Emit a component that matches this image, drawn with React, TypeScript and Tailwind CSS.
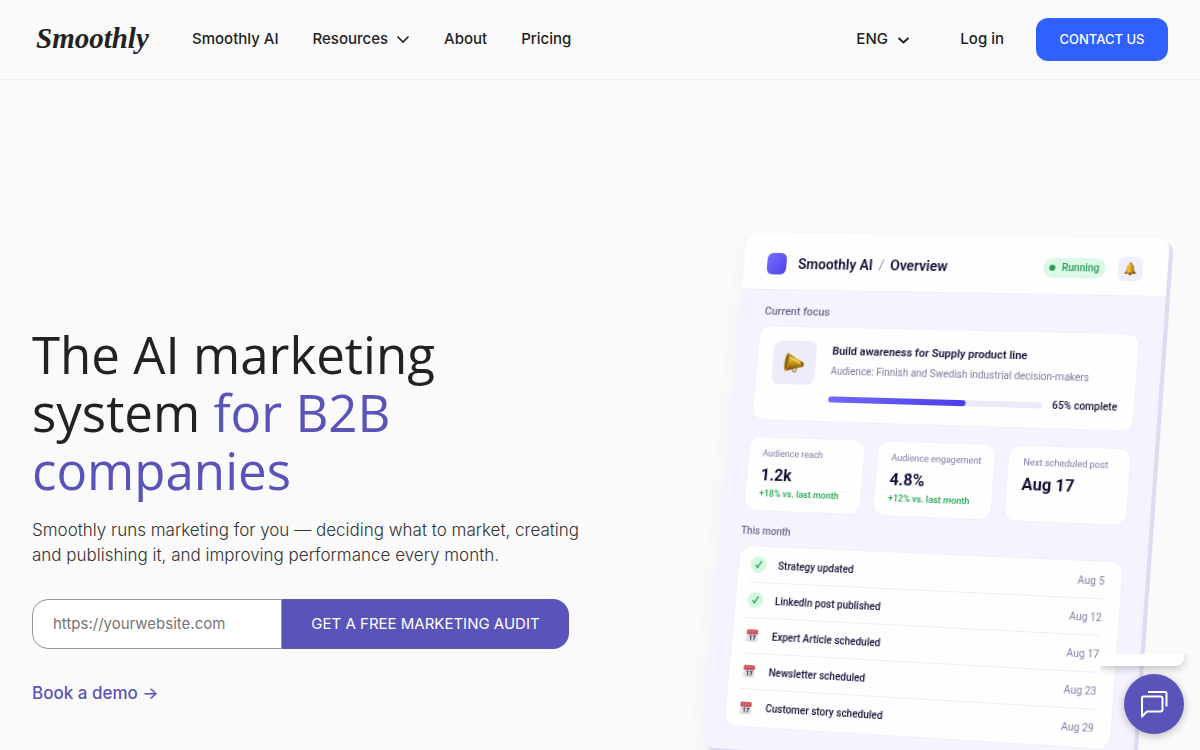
import React, { useState } from "react";

const stats = [
    { label: "Audience reach", value: "1.2k", delta: "+18% vs. last month" },
    { label: "Audience engagement", value: "4.8%", delta: "+12% vs. last month" },
    { label: "Next scheduled post", value: "Aug 17", delta: "" },
];

const posts = [
    { title: "Strategy updated", date: "Aug 5", done: true },
    { title: "LinkedIn post published", date: "Aug 12", done: true },
    { title: "Expert Article scheduled", date: "Aug 17", done: false },
    { title: "Newsletter scheduled", date: "Aug 23", done: false },
    { title: "Customer story scheduled", date: "Aug 29", done: false },
];

const MegaphoneIcon = () => (
    <svg className="w-6 h-6" viewBox="0 0 24 24" aria-hidden="true">
        <defs>
            <linearGradient id="horn" x1="0" y1="0" x2="0" y2="1">
                <stop offset="0" stopColor="#8a6410" />
                <stop offset="0.35" stopColor="#e8bb35" />
                <stop offset="0.65" stopColor="#b58416" />
                <stop offset="1" stopColor="#5e4108" />
            </linearGradient>
        </defs>
        <path d="M11 17.5v2.2c0 1 .8 1.6 1.8 1.6s1.8-.6 1.8-1.6v-3" fill="none" stroke="#a57a1c" strokeWidth="1.2" />
        <path d="M5 2.5 21 11.5c1.3.8 1.3 4 0 4.5L3.5 20.5z" fill="url(#horn)" />
        <path d="M20 11c1.8.3 2.6 4.2.8 5l-2.2.6c1-1.6 1-4.2-.3-6.3z" fill="#8a600e" />
        <ellipse cx="4.3" cy="11.5" rx="2.4" ry="9.2" fill="#c89622" transform="rotate(5 4 11)" />
        <ellipse cx="4.3" cy="11.5" rx="1.2" ry="7.6" fill="#7c5a14" transform="rotate(5 4 11)" />
        <path d="M7 6.5 18 12.5" stroke="#ffe88a" strokeWidth="1" />
    </svg>
);

const BellIcon = () => (
    <svg className="w-3.5 h-3.5" viewBox="0 0 16 16" aria-hidden="true">
        <defs>
            <linearGradient id="bell" x1="0" x2="1">
                <stop offset="0" stopColor="#9c6d0c" />
                <stop offset="0.35" stopColor="#f0c445" />
                <stop offset="0.65" stopColor="#c48e18" />
                <stop offset="1" stopColor="#6d4b0b" />
            </linearGradient>
        </defs>
        <circle cx="8" cy="2" r="1.4" fill="#a87a14" />
        <path d="M8 2c2.8 0 3.7 2 3.9 5 .2 2.7.9 4 2.4 5.3v1H1.7v-1C3.2 11 3.9 9.7 4.1 7 4.3 4 5.2 2 8 2z" fill="url(#bell)" />
        <path d="M2 12.6h12" stroke="#6d4b0b" strokeWidth="0.8" />
        <circle cx="8" cy="14" r="1.5" fill="#8c5f10" />
    </svg>
);

const CalendarIcon = () => (
    <svg className="w-3.5 h-3.5" viewBox="0 0 16 16" aria-hidden="true">
        <path d="M2 5h12l.6 8.5c0 .8-.5 1.5-1.3 1.5H2.7c-.8 0-1.3-.7-1.3-1.5z" fill="#dfe0e6" />
        <path d="M2.8 1.5h10.4c.8 0 1.2.5 1.2 1.2V6.5H1.6V2.7c0-.7.4-1.2 1.2-1.2z" fill="#c9414f" />
        <path d="M4 3.8h1.5M7.2 3.8h1.5M10.5 3.8H12" stroke="#f4c9cd" strokeWidth="1.2" />
        <path d="M5.2 8.8 6.5 8v5M8.5 8.3h3L9.7 13" fill="none" stroke="#44414f" strokeWidth="1.3" />
    </svg>
);

const CheckIcon = () => (
    <svg className="w-4 h-4" viewBox="0 0 16 16" aria-hidden="true">
        <circle cx="8" cy="8" r="8" fill="#d5f7e0" />
        <path d="M5.4 8.4 7.2 10.8 10.6 4.8" fill="none" stroke="#1f9d55" strokeWidth="1.3" strokeLinecap="round" />
    </svg>
);

const Navbar = () => {
    const [isOpen, setIsOpen] = useState(false);

    return (
        <header className="flex items-center justify-between h-20 px-8 border-b border-[#f0f0f0] text-[15px] text-[#222222] font-medium">
            <div className="flex items-center">
                <a href="#home" className="w-40 pl-1 pb-1 font-['Liberation_Serif',serif] text-[29px] leading-10 font-bold italic">
                    Smoothly
                </a>
                <nav className="flex items-center gap-[34px]">
                    <a href="#ai">Smoothly AI</a>
                    <button type="button" className="flex items-center gap-2" aria-expanded={isOpen} onClick={() => setIsOpen(!isOpen)}>
                        Resources
                        <svg className="w-3.5 h-3.5" viewBox="0 0 14 14" fill="none" stroke="currentColor" strokeWidth="1.6">
                            <path d="M1.5 3.5 7 9 12.5 3.5" />
                        </svg>
                    </button>
                    <a href="#about">About</a>
                    <a href="#pricing">Pricing</a>
                </nav>
            </div>

            <div className="flex items-center">
                <div className="relative mr-[50px]">
                    <select aria-label="Language" className="appearance-none bg-transparent w-[54px] outline-none">
                        <option>ENG</option>
                    </select>
                    <svg className="absolute right-0 top-1.5 w-3.5 h-3 pointer-events-none" viewBox="0 0 14 12" fill="none" stroke="currentColor" strokeWidth="2">
                        <path d="M2.5 4 7.5 8.5 12.5 4" />
                    </svg>
                </div>
                <a href="#login" className="mr-8">Log in</a>
                <a href="#contact" className="flex items-center justify-center w-[132px] h-[43px] rounded-xl bg-[#3060ff] text-white text-[13px]">
                    CONTACT US
                </a>
            </div>
        </header>
    );
};

// The panel is tilted away from the viewer, so the whole card carries one perspective matrix
const Dashboard = () => (
    <div className="w-[424px] shrink-0 origin-top-left [transform:matrix3d(0.9561,0.0113,0,-0.0000982,-0.08903,0.9717,0,-0.0000476,0,0,1,0,0,0,0,1)] rounded-xl bg-[#f5f3fe] font-[Roboto,sans-serif] text-[#120f35] shadow-[4px_3px_0_#dfdbf0,-4px_6px_14px_rgba(90,80,180,0.04)]">
        <div className="flex items-center h-[58px] px-6 pt-1 rounded-t-xl bg-[#fefefe] border-b border-[#f0edf9]">
            <span className="w-5 h-[22px] rounded-md bg-linear-to-br from-[#7a6cf7] to-[#5041f0]" />
            <span className="ml-3 text-sm font-semibold">Smoothly AI</span>
            <span className="mx-1.5 text-sm text-[#9995b5]">/</span>
            <span className="text-sm font-semibold">Overview</span>
            <span className="ml-auto flex items-center gap-1.5 h-5 px-1.5 rounded-full bg-[#dcf8e6] text-[#2a9d5c] text-[10px] font-medium">
                <span className="w-1.5 h-1.5 rounded-full bg-[#1f9d55]" />
                Running
            </span>
            <span className="ml-3 flex items-center justify-center w-6 h-6 rounded-md bg-[#f0edfc]">
                <BellIcon />
            </span>
        </div>

        <div className="px-[22px] pt-3.5 pb-[22px]">
            <h2 className="pl-1 text-[11px] leading-4 font-medium text-[#6d6893]">Current focus</h2>
            <div className="mt-1.5 flex gap-4 h-24 px-4 py-3.5 rounded-xl bg-[#fefefe] border border-[#f1eefa]">
                <span className="flex items-center justify-center w-11 h-11 rounded-lg bg-[#eeebfb]">
                    <MegaphoneIcon />
                </span>
                <div className="flex-1 pt-0.5">
                    <p className="text-[11px] leading-4 font-semibold">Build awareness for Supply product line</p>
                    <p className="mt-1 text-[10px] leading-4 text-[#7d78a3] whitespace-nowrap">Audience: Finnish and Swedish industrial decision-makers</p>
                    <div className="mt-3 flex items-center gap-2.5">
                        <span className="flex-1 h-1.5 rounded-full bg-[#ece9f9]">
                            <span className="block w-[65%] h-1.5 rounded-full bg-linear-to-r from-[#7468f8] to-[#4a3aea]" />
                        </span>
                        <span className="text-[10px] leading-4 font-medium">65% complete</span>
                    </div>
                </div>
            </div>

            <div className="mt-4 grid grid-cols-3 gap-3">
                {stats.map((stat) => (
                    <div key={stat.label} className="h-[75px] px-3.5 pt-2.5 rounded-xl bg-[#fefefe] border border-[#f1eefa] whitespace-nowrap">
                        <p className="text-[9px] leading-3 text-[#7d78a3]">{stat.label}</p>
                        <p className="mt-1.5 text-base leading-5 font-bold">{stat.value}</p>
                        <p className="mt-0.5 text-[9px] leading-3 font-medium text-[#1fa653]">{stat.delta}</p>
                    </div>
                ))}
            </div>

            <h2 className="mt-3 text-[10px] leading-4 font-medium text-[#6d6893]">This month</h2>
            <ul className="mt-1.5 pl-3 pr-4 py-px rounded-xl bg-[#fefefe] border border-[#f1eefa]">
                {posts.map((post) => (
                    <li key={post.title} className="flex items-center h-[35px] border-b border-[#efedf6] last:border-b-0 text-[10px]">
                        <span className="flex items-center justify-center w-4">{post.done ? <CheckIcon /> : <CalendarIcon />}</span>
                        <span className="ml-3 font-medium">{post.title}</span>
                        <span className="ml-auto text-[#827da6]">{post.date}</span>
                    </li>
                ))}
            </ul>
        </div>
    </div>
);

const ChatWidget = () => (
    <div className="fixed right-0 bottom-0 w-[100px] h-24 overflow-hidden">
        {/* Bottom edge of the collapsed greeting bubble */}
        <div className="mr-4 h-3 rounded-br-lg bg-white shadow-[0_2px_8px_rgba(0,0,0,0.25)]" />
        <button type="button" aria-label="Open chat" className="mt-2 ml-6 flex items-center justify-center w-[60px] h-[60px] rounded-full bg-[#5a53b9] shadow-[0_2px_8px_rgba(0,0,0,0.25)]">
            <svg className="w-7 h-7" viewBox="0 0 28 28" fill="none" stroke="white" strokeWidth="2" strokeLinejoin="round">
                <path d="M3.5 6.5h17a2 2 0 0 1 2 2v11a2 2 0 0 1-2 2H7l-5 5V8a1.5 1.5 0 0 1 1.5-1.5z" />
                <path d="M8 2H25a1.5 1.5 0 0 1 1.5 1.5V16.5" />
            </svg>
        </button>
    </div>
);

const App = () => {
    return (
        <div className="h-screen overflow-hidden bg-[#fafafa] font-[Inter,sans-serif]">
            <Navbar />
            <main className="flex justify-between pl-8 pr-[29px] pt-[153px]">
                <section className="pt-[92px]">
                    <h1 className="font-['Open_Sans',sans-serif] text-[51px] leading-[58px] text-[#222222]">
                        The AI marketing
                        <br />
                        system <span className="text-[#5a53b9]">for B2B</span>
                        <br />
                        <span className="text-[#5a53b9]">companies</span>
                    </h1>
                    <p className="mt-[19px] text-[17px] leading-[25px] font-light text-[#333333]">
                        Smoothly runs marketing for you — deciding what to market, creating
                        <br />
                        and publishing it, and improving performance every month.
                    </p>
                    <form className="mt-[31px] flex h-[50px]" onSubmit={(e) => e.preventDefault()}>
                        <input
                            type="url"
                            aria-label="Website address"
                            placeholder="https://yourwebsite.com"
                            className="w-[250px] px-5 rounded-l-2xl border border-[#999999] bg-white text-[15px] placeholder:text-[#757575] outline-none"
                        />
                        <button type="submit" className="w-[287px] rounded-r-2xl bg-[#5a53b9] text-white text-[15px]">
                            GET A FREE MARKETING AUDIT
                        </button>
                    </form>
                    <a href="#demo" className="mt-8 inline-block text-[17px] leading-6 font-medium text-[#5a53b9]">
                        Book a demo →
                    </a>
                </section>
                <Dashboard />
            </main>
            <ChatWidget />
        </div>
    );
};

export default App;
